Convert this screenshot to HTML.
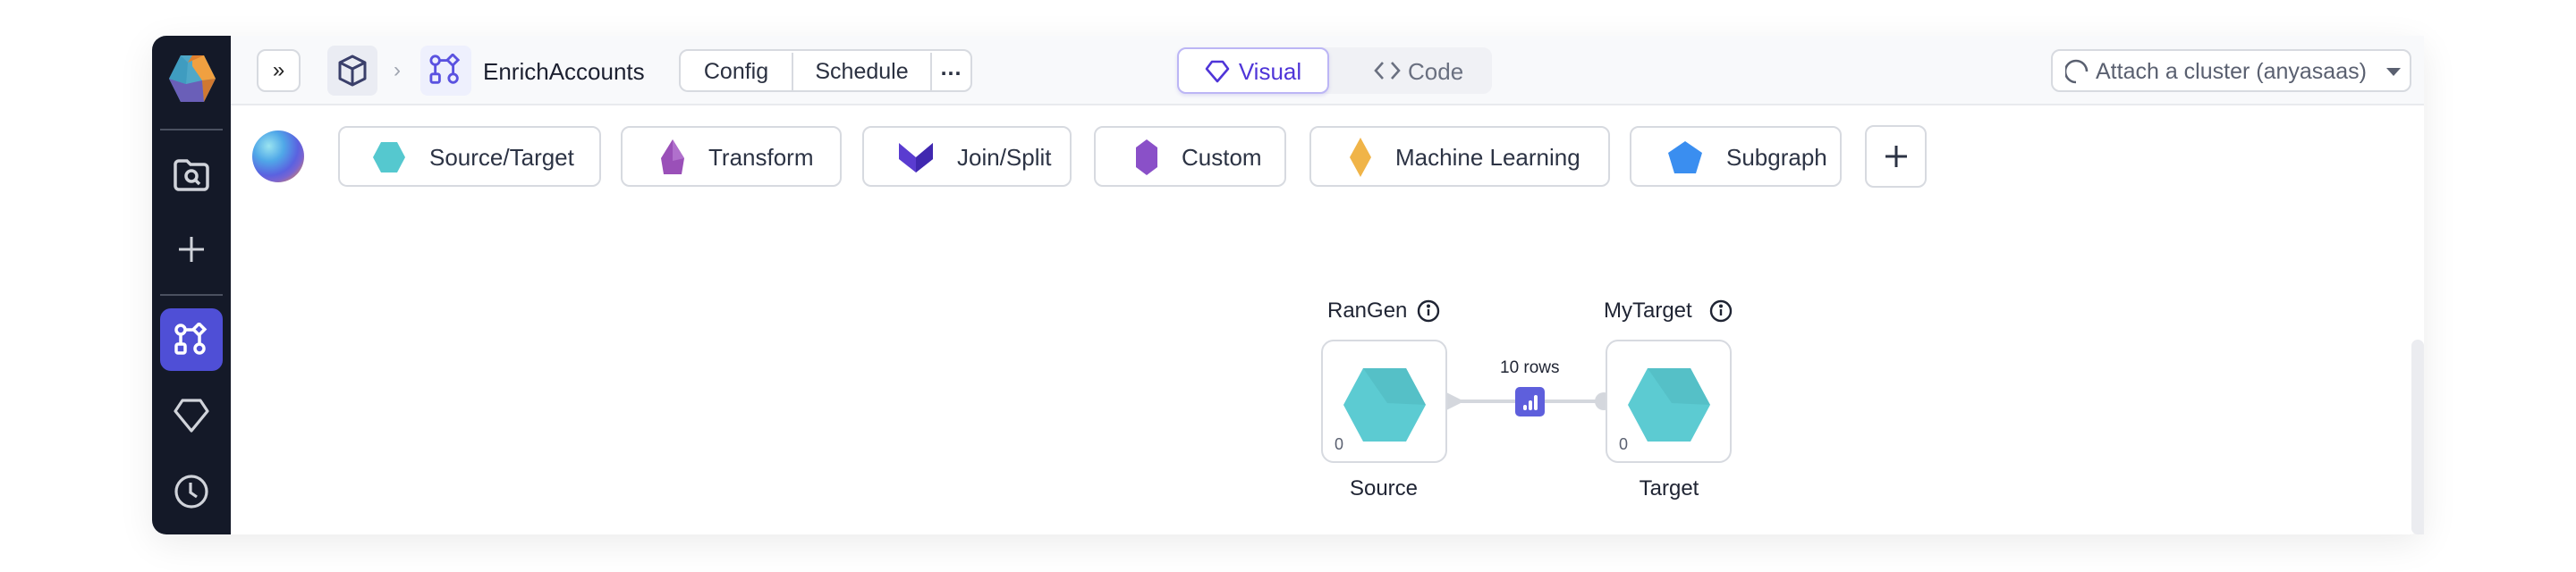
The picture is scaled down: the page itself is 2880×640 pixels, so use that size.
<!DOCTYPE html>
<html><head><meta charset="utf-8"><style>
*{box-sizing:border-box;margin:0;padding:0}
body{width:2880px;height:640px;background:#fff;position:relative;overflow:hidden;font-family:"Liberation Sans",sans-serif;color:#1f2433}
.abs{position:absolute}
.win{left:170px;top:40px;width:2540px;height:558px;border-radius:16px;background:#fff;box-shadow:0 10px 40px rgba(0,0,0,.08);overflow:hidden}
.side{left:170px;top:40px;width:88px;height:558px;background:#141928;border-radius:16px 0 0 16px}
.hdr{left:258px;top:40px;width:2452px;height:78px;background:#f8f9fb;border-bottom:2px solid #e8eaee}
.btn{position:absolute;border:2px solid #d7dae0;border-radius:10px;background:#fff;display:flex;align-items:center}
.pal{top:141px;height:68px;font-size:26px;color:#2c3344;padding-top:2px}
.pal svg{margin:0 26px 0 36px}
.t{position:absolute;white-space:nowrap}
</style></head><body>
<div class="abs win"></div>
<div class="abs side"></div>
<div class="abs hdr"></div>

<!-- sidebar -->
<svg class="abs" style="left:188px;top:60px" width="54" height="56" viewBox="0 0 54 56">
<polygon points="14,2 40,2 53,28 40,54 14,54 1,28" fill="#4fa8c8"/>
<polygon points="27,2 40,2 53,28 38,30 27,14" fill="#f0a040"/>
<polygon points="40,2 27,2 22,10" fill="#e08030"/>
<polygon points="1,28 14,54 40,54 38,30 20,34" fill="#6a5fb8"/>
<polygon points="38,30 53,28 40,54" fill="#d07830"/>
<polygon points="1,28 14,2 22,10 20,34" fill="#3f9cc0"/>
</svg>
<div class="abs" style="left:179px;top:144px;width:70px;height:2px;background:#4a5060"></div>
<svg class="abs" style="left:193px;top:176px" width="42" height="38" viewBox="0 0 42 38" fill="none" stroke="#d0d3da" stroke-width="3.5"><path d="M3 8a4 4 0 0 1 4-4h9l4 4h15a4 4 0 0 1 4 4v20a4 4 0 0 1-4 4H7a4 4 0 0 1-4-4z"/><circle cx="21" cy="21" r="6"/><path d="M25 25l5 5"/></svg>
<svg class="abs" style="left:199px;top:264px" width="30" height="30" viewBox="0 0 30 30" stroke="#d0d3da" stroke-width="3"><path d="M15 1v28M1 15h28"/></svg>
<div class="abs" style="left:179px;top:329px;width:70px;height:2px;background:#4a5060"></div>
<div class="abs" style="left:179px;top:345px;width:70px;height:70px;border-radius:12px;background:#4f4fd6"></div>
<svg class="abs" style="left:195px;top:361px" width="40" height="40" viewBox="0 0 40 40" fill="none" stroke="#fff" stroke-width="3.5"><circle cx="7" cy="8" r="5"/><path d="M12 8h10"/><rect x="23" y="3" width="9" height="9" transform="rotate(45 27.5 7.5)"/><rect x="2" y="24" width="10" height="10" rx="2"/><circle cx="28" cy="29" r="5"/><path d="M7 13v11M28 13v11"/></svg>
<svg class="abs" style="left:194px;top:446px" width="40" height="38" viewBox="0 0 40 38" fill="none" stroke="#d0d3da" stroke-width="3.2" stroke-linejoin="round"><path d="M10 2h20l8 12-18 22L2 14z"/></svg>
<svg class="abs" style="left:194px;top:530px" width="40" height="40" viewBox="0 0 40 40" fill="none" stroke="#d0d3da" stroke-width="3.2"><circle cx="20" cy="20" r="17"/><path d="M19 10v11l7 5"/></svg>

<!-- header -->
<div class="btn" style="left:287px;top:55px;width:49px;height:48px;justify-content:center;font-size:24px;color:#222">&raquo;</div>
<div class="abs" style="left:366px;top:51px;width:56px;height:56px;border-radius:8px;background:#eaecf3"></div>
<svg class="abs" style="left:377px;top:61px" width="34" height="36" viewBox="0 0 34 36" fill="none" stroke="#3a3f6a" stroke-width="3" stroke-linejoin="round"><path d="M17 2l14 7v18l-14 7-14-7V9z"/><path d="M3 9l14 7 14-7M17 16v18"/></svg>
<div class="t" style="left:440px;top:65px;font-size:24px;color:#a0a5b0">&rsaquo;</div>
<div class="abs" style="left:470px;top:51px;width:57px;height:56px;border-radius:8px;background:#eef0fd"></div>
<svg class="abs" style="left:480px;top:60px" width="38" height="38" viewBox="0 0 40 40" fill="none" stroke="#5a52e0" stroke-width="3"><circle cx="7" cy="8" r="5"/><path d="M12 8h10"/><rect x="23" y="3" width="9" height="9" transform="rotate(45 27.5 7.5)"/><rect x="2" y="24" width="10" height="10" rx="2"/><circle cx="28" cy="29" r="5"/><path d="M7 13v11M28 13v11"/></svg>
<div class="t" style="left:540px;top:65px;font-size:26px;color:#1c2030">EnrichAccounts</div>
<div class="btn" style="left:759px;top:55px;width:328px;height:48px;font-size:25px;color:#2a3040;padding-top:2px">
 <div style="width:124px;text-align:center">Config</div>
 <div style="width:2px;height:100%;background:#d7dae0"></div>
 <div style="width:153px;text-align:center">Schedule</div>
 <div style="width:2px;height:100%;background:#d7dae0"></div>
 <div style="flex:1;text-align:center;font-weight:bold;letter-spacing:1px;margin-top:-8px">...</div>
</div>
<div class="abs" style="left:1316px;top:53px;width:352px;height:52px;border-radius:10px;background:#f0f1f5"></div>
<div class="btn" style="left:1316px;top:53px;width:170px;height:52px;border-color:#bcb6f5;box-shadow:0 2px 4px rgba(80,70,200,.15);justify-content:center;color:#4f35d8;font-size:26px;padding-top:2px">
<svg width="28" height="26" viewBox="0 0 28 26" fill="none" stroke="#4f35d8" stroke-width="2.6" stroke-linejoin="round" style="margin-right:10px"><path d="M8 2h12l6 8-12 14L2 10z"/></svg>Visual</div>
<svg class="abs" style="left:1536px;top:68px" width="30" height="22" viewBox="0 0 30 22" fill="none" stroke="#6a7080" stroke-width="2.6"><path d="M10 2L2 11l8 9M20 2l8 9-8 9"/></svg>
<div class="t" style="left:1574px;top:65px;font-size:26px;color:#6a7080">Code</div>
<div class="btn" style="left:2293px;top:55px;width:403px;height:48px;font-size:25px;color:#5a6070;padding-top:2px">
<svg width="30" height="32" viewBox="0 0 30 32" fill="none" stroke="#5a6070" stroke-width="2.6" style="margin:0 4px 0 14px"><path d="M12 28A12 12 0 1 1 24 16"/></svg>Attach a cluster (anyasaas)
<div style="margin-left:22px;width:0;height:0;border-left:8px solid transparent;border-right:8px solid transparent;border-top:9px solid #5a6070"></div></div>

<!-- palette -->
<div class="abs" style="left:282px;top:146px;width:58px;height:58px;border-radius:50%;background:radial-gradient(circle at 32% 30%,#9ae4f0 0%,#50a8e8 30%,#5a62e0 58%,#7a64d0 70%,#f09040 92%)"></div>
<div class="btn pal" style="left:378px;width:294px"><svg width="38" height="38" viewBox="0 0 38 38"><polygon points="10,2 28,2 37,19 28,36 10,36 1,19" fill="#55c8cf"/></svg>Source/Target</div>
<div class="btn pal" style="left:694px;width:247px"><svg width="28" height="42" viewBox="0 0 28 42" style="margin-left:42px"><polygon points="14,1 27,22 24,40 4,40 1,22" fill="#9a50b8"/><polygon points="14,1 27,22 14,25" fill="#b070cc"/></svg>Transform</div>
<div class="btn pal" style="left:964px;width:234px"><svg width="40" height="36" viewBox="0 0 40 36" style="margin-left:38px"><polygon points="1,2 20,18 39,2 39,20 20,35 1,20" fill="#5a3cd0"/><polygon points="20,18 39,2 39,20 20,35" fill="#4028b0"/></svg>Join/Split</div>
<div class="btn pal" style="left:1223px;width:215px"><svg width="26" height="42" viewBox="0 0 26 42" style="margin-left:44px"><polygon points="13,1 25,10 25,32 13,41 1,32 1,10" fill="#8a50c8"/></svg>Custom</div>
<div class="btn pal" style="left:1464px;width:336px"><svg width="26" height="46" viewBox="0 0 26 46" style="margin-left:42px"><polygon points="13,1 25,23 13,45 1,23" fill="#f0b448"/></svg>Machine Learning</div>
<div class="btn pal" style="left:1822px;width:237px"><svg width="40" height="38" viewBox="0 0 40 38" style="margin-left:40px"><polygon points="20,1 39,14 32,37 8,37 1,14" fill="#3a8ef0"/></svg>Subgraph</div>
<div class="btn" style="left:2085px;top:140px;width:69px;height:70px;justify-content:center"><svg width="26" height="26" viewBox="0 0 26 26" stroke="#2c3344" stroke-width="3"><path d="M13 1v24M1 13h24"/></svg></div>

<!-- graph -->
<div class="t" style="left:1484px;top:334px;font-size:24px">RanGen</div>
<svg class="abs" style="left:1584px;top:335px" width="26" height="26" viewBox="0 0 26 26" fill="none" stroke="#1f2433" stroke-width="2.4"><circle cx="13" cy="13" r="11"/><path d="M13 11v7"/><circle cx="13" cy="7.5" r="0.8" fill="#1f2433"/></svg>
<div class="t" style="left:1793px;top:334px;font-size:24px">MyTarget</div>
<div class="abs" style="left:1911px;top:335px"><svg width="26" height="26" viewBox="0 0 26 26" fill="none" stroke="#1f2433" stroke-width="2.4"><circle cx="13" cy="13" r="11"/><path d="M13 11v7"/><circle cx="13" cy="7.5" r="0.8" fill="#1f2433"/></svg></div>

<div class="abs" style="left:1617px;top:447px;width:180px;height:4px;background:#d4d7dd"></div>
<svg class="abs" style="left:1615px;top:438px" width="24" height="22"><polygon points="0,0 22,11 0,22" fill="#d4d7dd"/></svg>
<div class="abs" style="left:1783px;top:439px;width:20px;height:20px;border-radius:50%;background:#d4d7dd"></div>

<div class="abs" style="left:1477px;top:380px;width:141px;height:138px;border:2px solid #d7dae0;border-radius:14px;background:#fff"></div>
<div class="abs" style="left:1795px;top:380px;width:141px;height:138px;border:2px solid #d7dae0;border-radius:14px;background:#fff"></div>
<svg class="abs" style="left:1501px;top:411px" width="94" height="84" viewBox="0 0 94 84"><polygon points="23,1 71,1 93,42 71,83 23,83 1,42" fill="#5ccbd2"/><polygon points="23,1 71,1 93,42 50,40" fill="#55c0c7"/></svg>
<svg class="abs" style="left:1819px;top:411px" width="94" height="84" viewBox="0 0 94 84"><polygon points="23,1 71,1 93,42 71,83 23,83 1,42" fill="#5ccbd2"/><polygon points="23,1 71,1 93,42 50,40" fill="#55c0c7"/></svg>
<div class="t" style="left:1492px;top:487px;font-size:18px;color:#5a6070">0</div>
<div class="t" style="left:1810px;top:487px;font-size:18px;color:#5a6070">0</div>

<div class="t" style="left:1677px;top:401px;font-size:19px">10 rows</div>
<div class="abs" style="left:1694px;top:433px;width:33px;height:33px;border-radius:5px;background:#5e5fdc"></div>
<svg class="abs" style="left:1694px;top:433px" width="33" height="33"><rect x="9" y="20" width="4" height="6" rx="2" fill="#fff"/><rect x="15" y="15" width="4" height="11" rx="2" fill="#fff"/><rect x="21" y="9" width="4" height="17" rx="2" fill="#fff"/></svg>

<div class="t" style="left:1547px;top:533px;font-size:24px;transform:translateX(-50%)">Source</div>
<div class="t" style="left:1866px;top:533px;font-size:24px;transform:translateX(-50%)">Target</div>

<div class="abs" style="left:2696px;top:380px;width:14px;height:218px;border-radius:7px 7px 0 7px;background:#ebecf0"></div>
</body></html>
